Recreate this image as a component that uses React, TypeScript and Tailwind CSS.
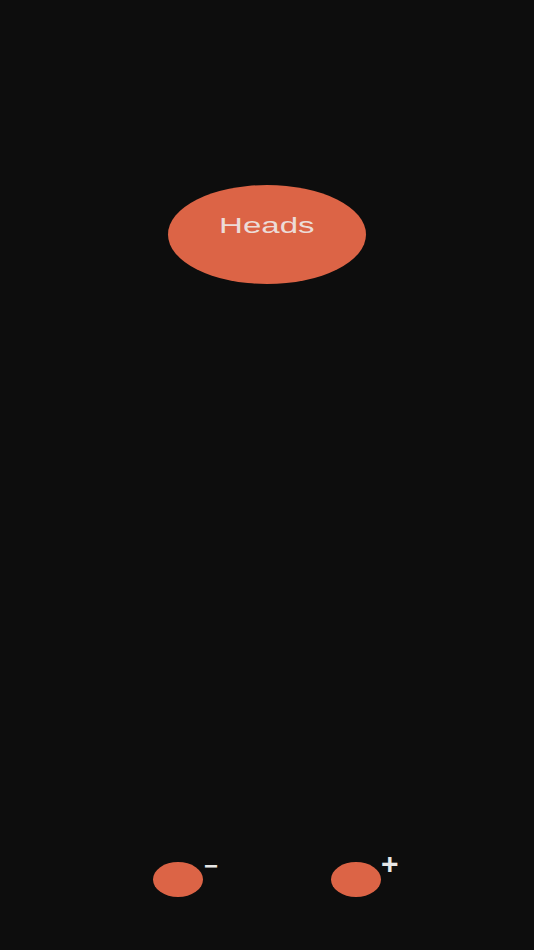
export default function App() {
  return (
    <div className="w-[534px] h-[950px] bg-[#0d0d0d] flex flex-col items-center font-['Liberation_Sans',Arial,sans-serif]">
      <button className="mt-[185px] w-[198px] h-[99px] rounded-[50%] bg-[#dc6446] flex items-center justify-center pb-[18px]">
        <span className="inline-block scale-x-[1.5] text-[22px] text-[#ecdcd8]">Heads</span>
      </button>
      <div className="mt-auto mb-[53px] flex gap-[128px]">
        <div className="relative">
          <div className="w-[50px] h-[35px] rounded-[50%] bg-[#dc6446]" />
          <span className="absolute left-[51px] top-[-8px] text-[24px] font-bold leading-none text-[#e6e6e6]">−</span>
        </div>
        <div className="relative">
          <div className="w-[50px] h-[35px] rounded-[50%] bg-[#dc6446]" />
          <span className="absolute left-[50px] top-[-13px] text-[30px] font-bold leading-none text-[#e6e6e6]">+</span>
        </div>
      </div>
    </div>
  );
}
